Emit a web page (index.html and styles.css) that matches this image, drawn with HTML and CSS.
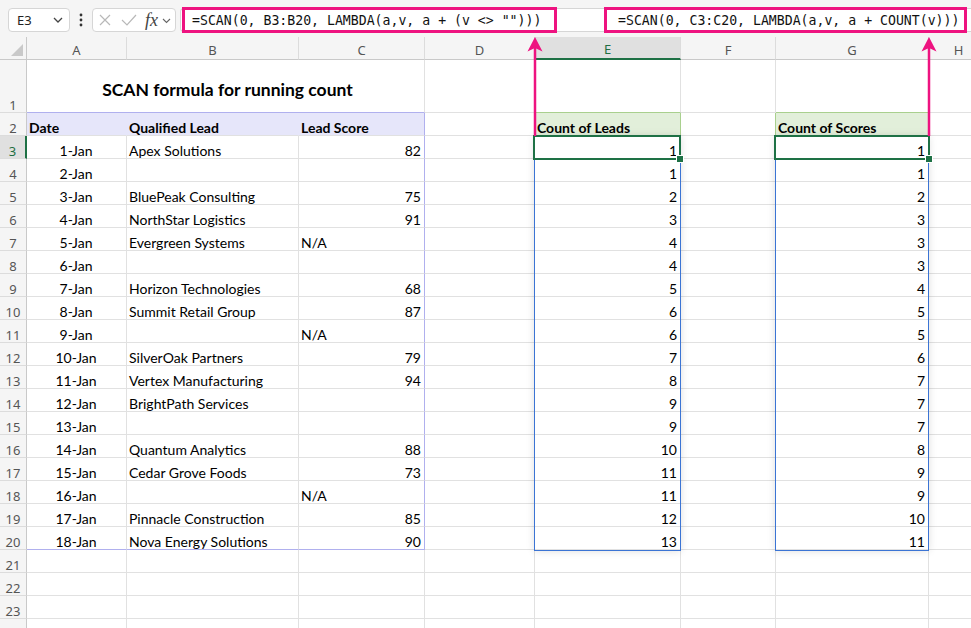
FILE: index.html
```html
<!DOCTYPE html>
<html lang="en">
<head>
<meta charset="utf-8">
<title>SCAN formula for running count</title>
<link rel="stylesheet" href="styles.css">
</head>
<body>
<div class="app">
  <div class="toolbar">
    <div class="namebox"><span>E3</span><svg class="chev" width="10" height="6" viewBox="0 0 10 6"><path d="M1 1l4 4 4-4" fill="none" stroke="#444" stroke-width="1.3"/></svg></div>
    <div class="dots"><svg width="4" height="16" viewBox="0 0 4 16"><circle cx="2" cy="3" r="1.4" fill="#333"/><circle cx="2" cy="8" r="1.4" fill="#333"/><circle cx="2" cy="13" r="1.4" fill="#333"/></svg></div>
    <div class="fnbox">
      <svg class="ic-x" width="12" height="12" viewBox="0 0 12 12"><path d="M1 1L11 11M11 1L1 11" stroke="#b8b8b8" stroke-width="1.2" fill="none"/></svg>
      <svg class="ic-ok" width="16" height="12" viewBox="0 0 16 12"><path d="M1 6l5 5L15 1" stroke="#b8b8b8" stroke-width="1.2" fill="none"/></svg>
      <span class="fx">fx</span>
      <svg class="ic-chev" width="9" height="6" viewBox="0 0 9 6"><path d="M1 1l3.5 3.5L8 1" fill="none" stroke="#666" stroke-width="1.1"/></svg>
    </div>
    <div class="fbar">
      <div class="formula f1">=SCAN(0, B3:B20, LAMBDA(a,v, a + (v &lt;&gt; "")))</div>
      <div class="formula f2">=SCAN(0, C3:C20, LAMBDA(a,v, a + COUNT(v)))</div>
    </div>
  </div>

  <div class="sheet">
    <!-- column headers -->
    <div class="ch corner"><svg width="14" height="14" viewBox="0 0 14 14"><path d="M13 1V13H1Z" fill="#c9c9c9"/></svg></div>
    <div class="ch">A</div><div class="ch">B</div><div class="ch">C</div><div class="ch">D</div>
    <div class="ch sel">E</div><div class="ch">F</div><div class="ch">G</div><div class="ch">H</div>

    <!-- row 1 -->
    <div class="rh">1</div>
    <div class="c title">SCAN formula for running count</div>
    <div class="c"></div><div class="c gb-b"></div><div class="c"></div><div class="c gb-b"></div><div class="c"></div>

    <!-- row 2 -->
    <div class="rh">2</div>
    <div class="c t">Date</div><div class="c t">Qualified Lead</div><div class="c t lb-r">Lead Score</div>
    <div class="c gb-r"></div><div class="c gh">Count of Leads</div><div class="c gb-r"></div><div class="c gh">Count of Scores</div><div class="c"></div>

    <div class="rh sel">3</div><div class="c ctr">1-Jan</div><div class="c">Apex Solutions</div><div class="c rt lb-r">82</div><div class="c"></div><div class="c rt">1</div><div class="c"></div><div class="c rt">1</div><div class="c"></div>
    <div class="rh">4</div><div class="c ctr">2-Jan</div><div class="c"></div><div class="c rt lb-r"></div><div class="c"></div><div class="c rt">1</div><div class="c"></div><div class="c rt">1</div><div class="c"></div>
    <div class="rh">5</div><div class="c ctr">3-Jan</div><div class="c">BluePeak Consulting</div><div class="c rt lb-r">75</div><div class="c"></div><div class="c rt">2</div><div class="c"></div><div class="c rt">2</div><div class="c"></div>
    <div class="rh">6</div><div class="c ctr">4-Jan</div><div class="c">NorthStar Logistics</div><div class="c rt lb-r">91</div><div class="c"></div><div class="c rt">3</div><div class="c"></div><div class="c rt">3</div><div class="c"></div>
    <div class="rh">7</div><div class="c ctr">5-Jan</div><div class="c">Evergreen Systems</div><div class="c lb-r">N/A</div><div class="c"></div><div class="c rt">4</div><div class="c"></div><div class="c rt">3</div><div class="c"></div>
    <div class="rh">8</div><div class="c ctr">6-Jan</div><div class="c"></div><div class="c lb-r"></div><div class="c"></div><div class="c rt">4</div><div class="c"></div><div class="c rt">3</div><div class="c"></div>
    <div class="rh">9</div><div class="c ctr">7-Jan</div><div class="c">Horizon Technologies</div><div class="c rt lb-r">68</div><div class="c"></div><div class="c rt">5</div><div class="c"></div><div class="c rt">4</div><div class="c"></div>
    <div class="rh">10</div><div class="c ctr">8-Jan</div><div class="c">Summit Retail Group</div><div class="c rt lb-r">87</div><div class="c"></div><div class="c rt">6</div><div class="c"></div><div class="c rt">5</div><div class="c"></div>
    <div class="rh">11</div><div class="c ctr">9-Jan</div><div class="c"></div><div class="c lb-r">N/A</div><div class="c"></div><div class="c rt">6</div><div class="c"></div><div class="c rt">5</div><div class="c"></div>
    <div class="rh">12</div><div class="c ctr">10-Jan</div><div class="c">SilverOak Partners</div><div class="c rt lb-r">79</div><div class="c"></div><div class="c rt">7</div><div class="c"></div><div class="c rt">6</div><div class="c"></div>
    <div class="rh">13</div><div class="c ctr">11-Jan</div><div class="c">Vertex Manufacturing</div><div class="c rt lb-r">94</div><div class="c"></div><div class="c rt">8</div><div class="c"></div><div class="c rt">7</div><div class="c"></div>
    <div class="rh">14</div><div class="c ctr">12-Jan</div><div class="c">BrightPath Services</div><div class="c lb-r"></div><div class="c"></div><div class="c rt">9</div><div class="c"></div><div class="c rt">7</div><div class="c"></div>
    <div class="rh">15</div><div class="c ctr">13-Jan</div><div class="c"></div><div class="c lb-r"></div><div class="c"></div><div class="c rt">9</div><div class="c"></div><div class="c rt">7</div><div class="c"></div>
    <div class="rh">16</div><div class="c ctr">14-Jan</div><div class="c">Quantum Analytics</div><div class="c rt lb-r">88</div><div class="c"></div><div class="c rt">10</div><div class="c"></div><div class="c rt">8</div><div class="c"></div>
    <div class="rh">17</div><div class="c ctr">15-Jan</div><div class="c">Cedar Grove Foods</div><div class="c rt lb-r">73</div><div class="c"></div><div class="c rt">11</div><div class="c"></div><div class="c rt">9</div><div class="c"></div>
    <div class="rh">18</div><div class="c ctr">16-Jan</div><div class="c"></div><div class="c lb-r">N/A</div><div class="c"></div><div class="c rt">11</div><div class="c"></div><div class="c rt">9</div><div class="c"></div>
    <div class="rh">19</div><div class="c ctr">17-Jan</div><div class="c">Pinnacle Construction</div><div class="c rt lb-r">85</div><div class="c"></div><div class="c rt">12</div><div class="c"></div><div class="c rt">10</div><div class="c"></div>
    <div class="rh">20</div><div class="c ctr lb-b">18-Jan</div><div class="c lb-b">Nova Energy Solutions</div><div class="c rt lb-r lb-b">90</div><div class="c"></div><div class="c rt">13</div><div class="c"></div><div class="c rt">11</div><div class="c"></div>

    <div class="rh">21</div><div class="c"></div><div class="c"></div><div class="c"></div><div class="c"></div><div class="c"></div><div class="c"></div><div class="c"></div><div class="c"></div>
    <div class="rh">22</div><div class="c"></div><div class="c"></div><div class="c"></div><div class="c"></div><div class="c"></div><div class="c"></div><div class="c"></div><div class="c"></div>
    <div class="rh">23</div><div class="c"></div><div class="c"></div><div class="c"></div><div class="c"></div><div class="c"></div><div class="c"></div><div class="c"></div><div class="c"></div>
    <div class="rh"></div><div class="c"></div><div class="c"></div><div class="c"></div><div class="c"></div><div class="c"></div><div class="c"></div><div class="c"></div><div class="c"></div>
  </div>

  <!-- spill ranges and selection overlays -->
  <div class="spill spill-e"></div>
  <div class="spill spill-g"></div>
  <div class="selbox sel-e"><span class="handle"></span></div>
  <div class="selbox sel-g"><span class="handle"></span></div>

  <!-- annotation arrows -->
  <svg class="annot" width="971" height="628" viewBox="0 0 971 628">
    <line x1="535" y1="48" x2="535" y2="136" stroke="#ee1380" stroke-width="2.5"/>
    <path d="M535 37L542.5 51.5L535 48L527.5 51.5Z" fill="#ee1380"/>
    <line x1="929" y1="48" x2="929" y2="136" stroke="#ee1380" stroke-width="2.5"/>
    <path d="M929 37L936.5 51.5L929 48L921.5 51.5Z" fill="#ee1380"/>
  </svg>
</div>
</body>
</html>
```

FILE: styles.css
```css
* { box-sizing: border-box; margin: 0; padding: 0; }
body { margin: 0; background: #fff; overflow: hidden; }

.app {
  position: relative;
  width: 971px;
  height: 628px;
  overflow: hidden;
  font-family: "Lato", "Liberation Sans", sans-serif;
  background: #fff;
}

/* ---------- formula toolbar ---------- */
.toolbar {
  height: 37px;
  background: #f5f5f5;
  display: flex;
  align-items: flex-start;
  padding: 8px 0 0 8px;
}
.namebox {
  width: 62px;
  height: 24px;
  background: #fff;
  border: 1px solid #d6d6d6;
  border-radius: 4px;
  display: flex;
  align-items: center;
  justify-content: space-between;
  padding: 0 6px 0 8px;
  font-family: "Noto Sans", sans-serif;
  font-size: 13px;
  color: #222;
}
.dots {
  width: 22px;
  height: 24px;
  display: flex;
  align-items: center;
  justify-content: center;
}
.fnbox {
  width: 84px;
  height: 24px;
  background: #fff;
  border: 1px solid #d6d6d6;
  border-radius: 4px;
  display: flex;
  align-items: center;
  padding-left: 6px;
}
.ic-ok { margin-left: 10px; }
.fx {
  margin-left: 8px;
  font-family: "Liberation Serif", serif;
  font-style: italic;
  font-size: 18px;
  color: #444;
  line-height: 20px;
}
.ic-chev { margin-left: 4px; margin-top: 2px; }

.fbar {
  flex: 1;
  height: 24px;
  margin-left: 4px;
  background: #fff;
  border: 1px solid #d6d6d6;
  border-right: none;
  border-radius: 4px 0 0 4px;
  display: flex;
  align-items: center;
  padding-left: 1px;
}
.formula {
  flex: none;
  height: 26px;
  border: 3px solid #ee1380;
  display: flex;
  align-items: center;
  font-family: "DejaVu Sans Mono", monospace;
  font-size: 13.2px;
  color: #111;
  white-space: pre;
}
.f1 { width: 375px; padding-left: 7px; }
.f2 { width: 363px; margin-left: 47px; padding-left: 11px; }

/* ---------- grid ---------- */
.sheet {
  display: grid;
  grid-template-columns: 27px 100px 172px 126px 110px 146px 95px 153px 60px;
  grid-template-rows: 23px 53px;
  grid-auto-rows: 23px;
}
.ch {
  background: #f5f5f5;
  border-right: 1px solid #dcdcdc;
  border-bottom: 1px solid #c9c9c9;
  display: flex;
  align-items: center;
  justify-content: center;
  padding-top: 3px;
  font-family: "Noto Sans", sans-serif;
  font-size: 13px;
  color: #555;
}
.ch.corner { align-items: flex-end; justify-content: flex-end; padding: 0 2px 2px 0; border-right-color: #c9c9c9; }
.ch.sel {
  background: #e0e0e0;
  color: #1e6e42;
  border-bottom: 2px solid #1e7145;
}
.rh {
  background: #f5f5f5;
  border-right: 1px solid #c9c9c9;
  border-bottom: 1px solid #dcdcdc;
  display: flex;
  align-items: flex-end;
  justify-content: center;
  padding-bottom: 0;
  font-family: "Noto Sans", sans-serif;
  font-size: 13px;
  line-height: 14px;
  color: #555;
}
.rh.sel {
  background: #e0e0e0;
  color: #1e6e42;
  border-right: 2px solid #1e7145;
}

.c {
  border-right: 1px solid #e1e1e1;
  border-bottom: 1px solid #e1e1e1;
  display: flex;
  align-items: flex-end;
  padding: 0 3px 0 2px;
  font-size: 14px;
  line-height: 14px;
  color: #000;
  white-space: nowrap;
  overflow: hidden;
}
.ctr { justify-content: center; }
.rt { justify-content: flex-end; }

.title {
  grid-column: span 3;
  justify-content: center;
  align-items: center;
  padding-top: 8px;
  padding-left: 7px;
  font-size: 17.5px;
  line-height: 22px;
  font-weight: 700;
  border-bottom-color: #b0b0ee;
}
.t {
  background: #e6e6fa;
  font-weight: 700;
  border-right-color: #e6e6fa;
}
.lb-r { border-right-color: #b0b0ee; }
.lb-b { border-bottom-color: #b0b0ee; }
.gb-b { border-bottom-color: #a9d08e; }
.gb-r { border-right-color: #a9d08e; }
.gh {
  background: #e2efda;
  font-weight: 700;
  border-right-color: #a9d08e;
}

/* ---------- overlays ---------- */
.spill {
  position: absolute;
  top: 136px;
  height: 415px;
  border: 1px solid #3b74d4;
  box-shadow: 0 0 8px rgba(0, 0, 0, 0.13);
  pointer-events: none;
}
.spill-e { left: 534px; width: 147px; }
.spill-g { left: 775px; width: 154px; }

.selbox {
  position: absolute;
  top: 135px;
  height: 25px;
  border: 2px solid #1e7145;
  pointer-events: none;
}
.sel-e { left: 533px; width: 148px; }
.sel-g { left: 774px; width: 156px; }
.handle {
  position: absolute;
  right: -4px;
  bottom: -4px;
  width: 6px;
  height: 6px;
  background: #1e7145;
  outline: 1px solid #fff;
}

.annot {
  position: absolute;
  left: 0;
  top: 0;
  pointer-events: none;
}
```
